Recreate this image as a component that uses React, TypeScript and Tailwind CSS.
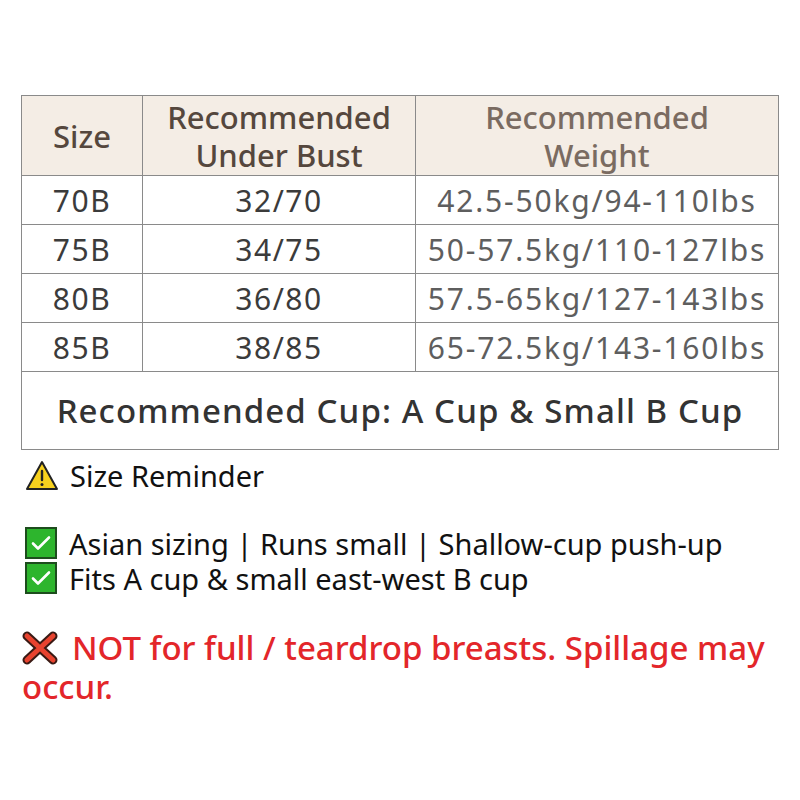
const rows = [
  { size: '70B', bust: '32/70', weight: '42.5-50kg/94-110lbs' },
  { size: '75B', bust: '34/75', weight: '50-57.5kg/110-127lbs' },
  { size: '80B', bust: '36/80', weight: '57.5-65kg/127-143lbs' },
  { size: '85B', bust: '38/85', weight: '65-72.5kg/143-160lbs' },
];

const CheckBox = () => (
  <svg width="32" height="32" viewBox="0 0 32 32" className="shrink-0">
    <rect x="1" y="1" width="30" height="30" fill="#2db52d" stroke="#1d4d1d" strokeWidth="2" />
    <path d="M8 16.5l5 5 11-11" fill="none" stroke="#ffffff" strokeWidth="2.6" strokeLinecap="round" strokeLinejoin="round" />
  </svg>
);

const Warning = () => (
  <svg width="34" height="32" viewBox="0 0 34 32" className="shrink-0">
    <path d="M17 2L32 29H2Z" fill="#f7d11e" stroke="#222" strokeWidth="2" strokeLinejoin="round" />
    <path d="M17 11v9" stroke="#222" strokeWidth="2.4" strokeLinecap="round" />
    <circle cx="17" cy="24.5" r="1.5" fill="#222" />
  </svg>
);

const Cross = () => (
  <svg width="36" height="34" viewBox="0 0 36 34" className="shrink-0">
    <path d="M5 5L31 29M31 5L5 29" stroke="#3a1a14" strokeWidth="9" strokeLinecap="round" />
    <path d="M5 5L31 29M31 5L5 29" stroke="#e8432f" strokeWidth="5" strokeLinecap="round" />
  </svg>
);

export default function App() {
  return (
    <div className="w-[800px] h-[800px] bg-white pt-[95px] font-['Noto_Sans',sans-serif]">
      <div className="ml-[21px] w-[758px] border border-[#8a8a8a]">
        <div className="grid grid-cols-[121px_273px_1fr] bg-[#f4ede5] h-[79px] text-[31px] font-medium leading-[38px] text-[#55473d]">
          <div className="flex items-center justify-center border-r border-[#8a8a8a]">Size</div>
          <div className="flex items-center justify-center text-center border-r border-[#8a8a8a]">
            Recommended<br />Under Bust
          </div>
          <div className="flex items-center justify-center text-center text-[#7a6b61]">
            Recommended<br />Weight
          </div>
        </div>
        {rows.map(r => (
          <div key={r.size} className="grid grid-cols-[121px_273px_1fr] h-[49px] border-t border-[#8a8a8a] text-[30px] text-[#3b3b3b]">
            <div className="flex items-center justify-center border-r border-[#8a8a8a] tracking-[1.5px]">{r.size}</div>
            <div className="flex items-center justify-center border-r border-[#8a8a8a] tracking-[1.5px]">{r.bust}</div>
            <div className="flex items-center justify-center text-[#5e5e5e] tracking-[1.8px]">{r.weight}</div>
          </div>
        ))}
        <div className="h-[78px] border-t border-[#8a8a8a] flex items-center justify-center text-[33px] font-medium text-[#333] tracking-[1.1px]">
          Recommended Cup: A Cup &amp; Small B Cup
        </div>
      </div>

      <div className="pl-[25px] mt-[4px] flex items-center gap-[11px] text-[29px] text-[#111]">
        <Warning />
        <span>Size Reminder</span>
      </div>

      <div className="pl-[25px] mt-[28px] flex flex-col text-[29px] text-[#111] leading-[35px]">
        <div className="flex items-center gap-[12px]">
          <CheckBox />
          <span>Asian sizing | Runs small | Shallow-cup push-up</span>
        </div>
        <div className="flex items-center gap-[12px]">
          <CheckBox />
          <span>Fits A cup &amp; small east-west B cup</span>
        </div>
      </div>

      <div className="pl-[22px] pr-[16px] mt-[32px] text-[33px] font-medium text-[#e3262a] leading-[39px]">
        <span className="inline-flex align-middle mr-[14px] -mt-[6px]"><Cross /></span>
        NOT for full / teardrop breasts. Spillage may occur.
      </div>
    </div>
  );
}
